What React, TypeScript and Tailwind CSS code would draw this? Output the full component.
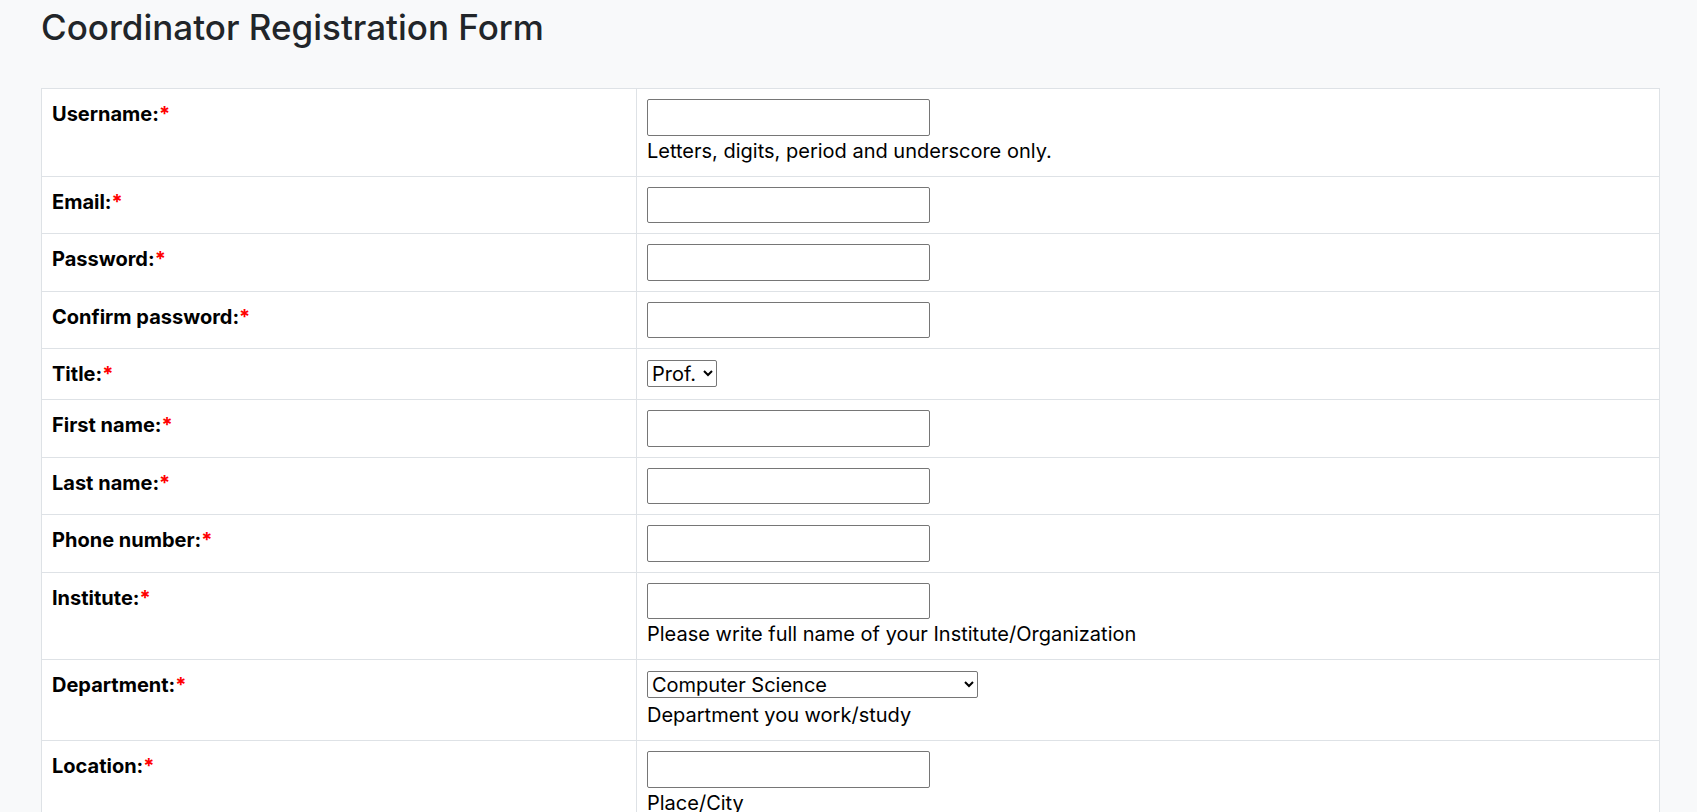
const fieldRows = [
  { label: "Username", kind: "text", help: "Letters, digits, period and underscore only." },
  { label: "Email", kind: "text" },
  { label: "Password", kind: "password" },
  { label: "Confirm password", kind: "password" },
  { label: "Title", kind: "title" },
  { label: "First name", kind: "text" },
  { label: "Last name", kind: "text" },
  { label: "Phone number", kind: "text" },
  { label: "Institute", kind: "text", help: "Please write full name of your Institute/Organization" },
  { label: "Department", kind: "department", help: "Department you work/study" },
  { label: "Location", kind: "text", help: "Place/City" },
];

function Field({ kind }: { kind: string }) {
  if (kind === "title") {
    return (
      <select
        defaultValue="Prof."
        className="mt-[1px] block h-[27px] w-[70px] rounded-[2px] border border-[#767676] bg-white pl-0 text-[20px] leading-[24px] text-black"
      >
        <option>Prof.</option>
        <option>Dr.</option>
        <option>Mr.</option>
        <option>Mrs.</option>
        <option>Ms.</option>
      </select>
    );
  }
  if (kind === "department") {
    return (
      <select
        defaultValue="Computer Science"
        className="mb-[2px] mt-[1px] block h-[27px] w-[331px] rounded-[2px] border border-[#767676] bg-white pl-0 text-[20px] leading-[24px] text-black"
      >
        <option>Computer Science</option>
        <option>Electrical Engineering</option>
        <option>Mechanical Engineering</option>
      </select>
    );
  }
  return (
    <input
      type={kind}
      className="block h-[36.5px] w-[283px] rounded-[2px] border border-[#767676] bg-white px-[3px] text-[20px]"
    />
  );
}

export default function App() {
  return (
    <div className="min-h-screen bg-[#f8f9fa] pl-[41px] pr-[37px] pt-[6px] font-['Inter',sans-serif] text-[20px] leading-[30px] text-[#212529]">
      <h2 className="mb-[40px] text-[35px] font-medium leading-[42px] text-[#212529]">
        Coordinator Registration Form
      </h2>
      <table className="w-full table-fixed border-collapse bg-white">
        <colgroup>
          <col className="w-[595px]" />
          <col />
        </colgroup>
        <tbody>
          {fieldRows.map((row) => (
            <tr key={row.label}>
              <td className="border border-[#dee2e6] p-[10px] align-top font-bold text-black">
                {row.label}:<span className="text-[#ff0000]">*</span>
              </td>
              <td className="border border-[#dee2e6] p-[10px] align-top text-black">
                <Field kind={row.kind} />
                {row.help && <div>{row.help}</div>}
              </td>
            </tr>
          ))}
        </tbody>
      </table>
    </div>
  );
}
